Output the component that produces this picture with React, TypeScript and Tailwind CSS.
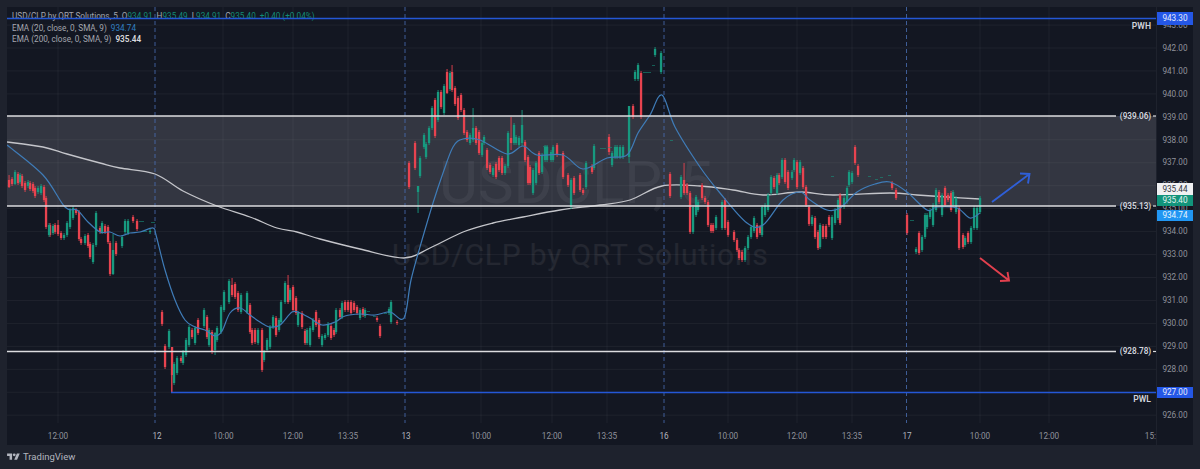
type Candle = [number, number, number, number?, number?];

const RED: Candle[] = [
  [9,180,187,175,188],[12,179,184],[18,174,183],[22,176,186],[25,183,190],[30,183,189],[33,184,191],[35,188,196],
  [44,187,200],[46,198,227],[50,225,235],[55,225,232],[58,225,234,220,236],[61,233,238],[76,210,213],[79,212,239],[81,239,243],
  [88,235,246],[90,244,257],[100,228,232],[105,226,232],[108,227,242],[110,243,274],[116,243,254],[133,217,221],[137,221,229],
  [162,312,324],[165,346,367],[172,347,375,347,392],[181,358,361],[192,330,337],[198,320,333],
  [207,317,337],[212,332,352],[232,285,295,278,297],[235,284,297],[238,293,310],[250,305,332],[252,330,343],[255,330,342],[262,330,370],
  [276,318,335],[288,285,302,275,304],[293,287,310],[296,298,313],[302,313,327],[305,331,343],[316,312,325],[319,320,337],[331,326,338],[334,330,335],
  [340,310,317],[345,302,310],[348,302,310],[351,302,313],[354,303,310],[357,307,313],[363,309,315],[377,318,320],[380,326,336],[397,322,323],
  [409,163,187],[415,143,168],[435,100,136],[441,92,107],[447,72,93,69,94],[452,72,90,65,92],[455,88,104],[458,98,118],[461,95,110],[464,110,133],[467,132,140],
  [476,128,143],[479,132,153],[487,150,168],[490,165,172],[496,164,177],[499,158,170],[502,158,173],[511,138,143,117,150],[525,142,160],[528,157,183],
  [530,167,183],[539,153,173],[557,145,155],[563,153,177],[568,175,185],[574,178,193],[580,175,190],[583,190,193],[592,166,172],[609,137,152,134,155],[633,106,117],[641,73,117],
  [670,174,196],[684,180,193,163,195],[687,185,193],[690,193,232],[702,185,198],[705,198,202],[708,202,225],[711,225,231],[713,225,231],[725,200,228],[728,222,235],[734,232,240],[737,240,250],[739,250,258],[742,252,260],
  [757,225,237],[760,227,233],[774,178,187],[779,175,183],[785,160,182],[788,172,188],[797,162,187],[803,168,187],[806,187,205],[809,207,224],[815,218,237],[818,232,248],[823,226,237],[826,226,237],[829,217,225],
  [840,195,223],[855,147,163],[858,166,175],[892,183,188],[896,190,198],[907,215,233],[919,233,253],[939,192,202],[945,188,205],[948,195,200],[951,193,210],[959,208,248],[963,235,247],[968,233,242],
];

const GREEN: Candle[] = [
  [15,172,184,170,185],[20,175,182],[28,182,186],[38,188,192],[41,186,193],[49,225,235],[53,226,233],[64,235,238],[67,223,235],[70,210,227],[73,208,218],
  [85,236,243],[93,245,262],[96,213,245],[102,223,232],[113,250,274,234,275],[122,237,246],[125,221,232],[128,221,233],[150,231,232],
  [169,331,347],[174,364,383],[177,358,373],[183,352,363],[186,340,355],[189,327,345],[195,328,343],
  [204,310,326],[209,330,345],[215,333,350,332,355],[217,328,340],[221,307,332],[224,292,310],[229,281,302],[241,295,312],[247,293,312],[258,330,343],[264,352,360],[267,340,350],[270,327,347],[273,317,327],
  [279,320,330],[281,302,322],[285,283,302],[290,290,300],[298,313,325],[307,330,343],[310,328,345],[313,320,330],[322,336,345],[325,335,338],[328,324,335],[336,310,332],[342,303,317],[360,310,318],[365,310,316],[389,309,313],[391,302,322],
  [418,186,192,186,213],[420,158,176],[424,135,147],[426,144,157],[429,128,143],[432,108,128],[438,92,120],[444,86,113],[450,73,89],[470,135,143],[473,128,140,108,142],[482,143,155],[484,137,143],
  [493,168,175],[505,166,173],[508,133,166],[514,125,143],[516,137,143],[519,138,145],[522,125,143,110,146],
  [533,170,193],[536,163,183],[542,155,172],[545,147,160],[547,147,160],[551,152,160],[553,147,160],[571,180,207],[586,163,187],[594,146,168],[612,153,165],[615,147,157],[617,147,157],[620,147,157],[623,147,157],[629,106,157,106,163],[635,72,79],[638,65,79],[655,49,55],[661,53,72],
  [681,177,197],[693,207,232],[696,197,215],[698,202,210],[716,217,228],[722,202,228],[745,248,260],[748,237,248],[751,227,237],[754,218,231],[762,207,235],[765,205,215],[768,195,210],[771,177,193],[777,175,193],[782,160,177],[792,172,178],[794,160,170],[800,162,173],[812,217,224],[820,225,247],
  [832,217,238],[835,210,223],[838,200,218],[844,198,207],[847,188,202],[849,172,185],[852,173,182],[916,249,252],[922,237,250],[925,215,237],[927,215,227],[930,210,217],[933,205,225],[936,190,210],[942,195,215],[953,192,205],[956,198,212],[965,238,245],[971,228,242],[974,208,228],[977,208,228],[980,198,212],
];

// little dashes the screenshot shows next to some candles
const DASHES: [number, number, number][] = [
  [139,221,5],[141,231,6],[151,222,4],[543,146,5],[600,148,6],[608,147,4],[643,72,8],[652,65,3],[670,140,3],[831,176,3],[868,176,3],[875,179,3],[880,177,3],[888,175,3],[910,220,4],[367,311,3],[373,316,3],[384,313,3],
];

const EMA20: [number, number][] = [[7,145],[43,175],[65,207],[77,210],[88,222],[100,232],[110,232],[120,236],[130,233],[140,232],[153,228],[156,235],[165,270],[175,300],[185,320],[195,327],[205,330],[215,336],[222,331],[230,313],[240,308],[250,315],[260,322],[270,327],[280,325],[292,312],[300,313],[310,318],[322,325],[335,322],[345,316],[360,314],[375,315],[390,312],[404,318],[411,280],[422,240],[433,203],[443,173],[453,147],[463,139],[480,140],[507,154],[523,146],[537,155],[563,155],[583,169],[607,158],[627,155],[638,133],[650,115],[662,95],[675,127],[700,167],[720,193],[747,223],[763,225],[783,200],[800,192],[810,200],[827,210],[840,208],[857,192],[875,184],[890,182],[907,192],[927,210],[937,207],[957,208],[970,218],[980,213]];
const EMA200: [number, number][] = [[7,142],[43,147],[67,154],[100,163],[120,168],[155,174],[183,191],[217,206],[250,217],[277,228],[297,232],[320,239],[360,249],[404,258],[430,248],[463,232],[493,223],[523,217],[560,210],[600,205],[630,200],[662,186],[700,186],[733,190],[763,195],[800,192],[833,195],[890,193],[917,195],[947,197],[980,199]];

// catmull-rom through the points so the averages don't look angular
const smoothPath = (pts: [number, number][]) => {
  let d = `M${pts[0][0]} ${pts[0][1]}`;
  for (let i = 0; i < pts.length - 1; i++) {
    const p0 = pts[Math.max(i - 1, 0)];
    const p1 = pts[i];
    const p2 = pts[i + 1];
    const p3 = pts[Math.min(i + 2, pts.length - 1)];
    const c1x = p1[0] + (p2[0] - p0[0]) / 6;
    const c1y = p1[1] + (p2[1] - p0[1]) / 6;
    const c2x = p2[0] - (p3[0] - p1[0]) / 6;
    const c2y = p2[1] - (p3[1] - p1[1]) / 6;
    d += ` C${c1x.toFixed(1)} ${c1y.toFixed(1)} ${c2x.toFixed(1)} ${c2y.toFixed(1)} ${p2[0]} ${p2[1]}`;
  }
  return d;
};

const GRID_X = [58, 223, 293, 348, 481, 552, 607, 728, 797, 852, 980, 1049];
const SESSIONS = [155, 405, 664, 906.5];
const PRICES = [943, 942, 941, 940, 939, 938, 937, 936, 935, 934, 933, 932, 931, 930, 929, 928, 927, 926];
const priceY = (p: number) => 48 + (942 - p) * 22.95;

const TIMES: [string, number, boolean][] = [
  ["12:00", 58, false], ["12", 157, true], ["10:00", 223.5, false], ["12:00", 293, false], ["13:35", 348, false], ["13", 406, true],
  ["10:00", 481, false], ["12:00", 552, false], ["13:35", 607, false], ["16", 664, true], ["10:00", 728, false], ["12:00", 797, false],
  ["13:35", 852, false], ["17", 907, true], ["10:00", 980, false], ["12:00", 1049, false], ["15:00", 1155, false],
];

const LEVELS: [string, number][] = [["(939.06)", 116], ["(935.13)", 206], ["(928.78)", 351.5]];

function Candles({ data, color }: { data: Candle[]; color: string }) {
  return (
    <g fill={color}>
      {data.map(([x, top, bottom, wickTop, wickBottom], i) => (
        <g key={i}>
          <rect x={x - 0.4} y={wickTop ?? top - 2} width={0.9} height={(wickBottom ?? bottom + 2) - (wickTop ?? top - 2)} />
          <rect x={x - 1.1} y={top} width={2.3} height={bottom - top} />
        </g>
      ))}
    </g>
  );
}

function ChartDrawing() {
  return (
    <svg className="absolute inset-0 h-full w-full" viewBox="7 7 1149 416">
      {GRID_X.map((x) => (
        <line key={x} x1={x} x2={x} y1={7} y2={423} stroke="#ffffff" strokeOpacity={0.05} />
      ))}
      {PRICES.map((p) => (
        <line key={p} x1={7} x2={1156} y1={priceY(p)} y2={priceY(p)} stroke="#ffffff" strokeOpacity={0.05} />
      ))}
      <rect x={7} y={116} width={1149} height={90} fill="#b2b5be" fillOpacity={0.2} />
      {SESSIONS.map((x) => (
        <line key={x} x1={x} x2={x} y1={7} y2={423} stroke="#4a6fb5" strokeOpacity={0.8} strokeDasharray="4 3" />
      ))}
      <path d={smoothPath(EMA200)} fill="none" stroke="#c4c5ca" strokeWidth={1.3} />
      <Candles data={RED} color="#e8434f" />
      <Candles data={GREEN} color="#17997f" />
      {DASHES.map(([x, y, w], i) => (
        <rect key={i} x={x} y={y} width={w} height={0.8} fill="#17997f" fillOpacity={0.7} />
      ))}
      <path d={smoothPath(EMA20)} fill="none" stroke="#3f7cb8" strokeWidth={1.2} />

      <line x1={7} x2={1156} y1={18.5} y2={18.5} stroke="#2457d6" strokeWidth={1.4} />
      <line x1={171.5} x2={171.5} y1={375} y2={392.5} stroke="#e8434f" strokeWidth={0.8} />
      <line x1={171} x2={1156} y1={392.5} y2={392.5} stroke="#2457d6" strokeWidth={1.4} />
      {LEVELS.map(([label, y]) => (
        <g key={label}>
          <line x1={7} x2={1116} y1={y} y2={y} stroke="#dcdcdf" strokeWidth={1.6} />
          <line x1={1153} x2={1156} y1={y} y2={y} stroke="#dcdcdf" strokeWidth={1.2} />
          <text x={1135.5} y={y + 2.9} textAnchor="middle" fill="#d1d4dc" fontSize={8.2} fontWeight={600} fontFamily="Roboto, sans-serif">
            {label}
          </text>
        </g>
      ))}
      <text x={1151} y={28.5} textAnchor="end" fill="#d1d4dc" fontSize={8.6} fontWeight={600} fontFamily="Roboto, sans-serif">PWH</text>
      <text x={1151} y={402} textAnchor="end" fill="#d1d4dc" fontSize={8.6} fontWeight={600} fontFamily="Roboto, sans-serif">PWL</text>

      <g fill="none" strokeWidth={1.9}>
        <path d="M992 202 L1029.5 174 M1020 173.5 L1029.5 174 L1028 183.5" stroke="#2f5fd8" />
        <path d="M980 258 L1009 280.5 M1000 281 L1009 280.5 L1007.5 272" stroke="#e2404e" />
      </g>
    </svg>
  );
}

function PriceTag({ label, className }: { label: string; className: string }) {
  return (
    <div className={`absolute left-0 flex w-[36px] items-center justify-center text-[8.2px] ${className}`}>{label}</div>
  );
}

export default function App() {
  return (
    <div className="flex h-[469px] w-[1200px] flex-col overflow-hidden bg-[#1e222d] px-[7px] pt-[7px] font-['Roboto',sans-serif]">
      <div className="flex h-[438px] w-[1186px] bg-[#131722]">
        <div className="flex w-[1149px] flex-col">
          <div className="relative h-[416px] overflow-hidden">
            {/* watermark */}
            <div className="absolute left-[432px] top-[146px] text-[60px] leading-none whitespace-nowrap text-white/[0.06]">USDCLP, 5</div>
            <div className="absolute left-[385px] top-[233px] text-[30px] leading-none tracking-[0.8px] whitespace-nowrap text-white/[0.07]">USD/CLP by QRT Solutions</div>
            {/* legend */}
            <div className="absolute left-[5px] top-[4px] flex flex-col text-[8.2px] leading-[11.5px] text-[#a3a6af]">
              <div className="flex gap-[4px] whitespace-nowrap">
                <span>USD/CLP by QRT Solutions, 5</span>
                <span>O<span className="text-[#128a74]">934.91</span></span>
                <span>H<span className="text-[#128a74]">935.49</span></span>
                <span>L<span className="text-[#128a74]">934.91</span></span>
                <span>C<span className="text-[#128a74]">935.40</span></span>
                <span className="text-[#128a74]">+0.40 (+0.04%)</span>
              </div>
              <div className="flex gap-[4px] whitespace-nowrap">
                <span>EMA (20, close, 0, SMA, 9)</span>
                <span className="text-[#2f7fc1]">934.74</span>
              </div>
              <div className="flex gap-[4px] whitespace-nowrap">
                <span>EMA (200, close, 0, SMA, 9)</span>
                <span className="font-semibold text-[#d8d9dd]">935.44</span>
              </div>
            </div>
            <ChartDrawing />
          </div>
          <div className="relative h-[22px] overflow-hidden text-[8.2px] text-[#8f929b]">
            {TIMES.map(([label, x, bold], i) => (
              <span
                key={i}
                className={`absolute top-[7px] -translate-x-1/2 leading-[12px] ${bold ? "text-[#b2b5be]" : ""}`}
                style={{ left: x - 7 }}
              >
                {label}
              </span>
            ))}
          </div>
        </div>
        <div className="relative w-[37px] border-l border-[#1e222d]">
          <div className="flex flex-col pt-[6.5px] text-[8.2px] text-[#8f929b]">
            {PRICES.map((p) => (
              <div key={p} className="flex h-[22.95px] shrink-0 items-center justify-center">{p.toFixed(2)}</div>
            ))}
          </div>
          <PriceTag label="943.30" className="top-[5px] h-[13px] bg-[#2457e6] text-[#e6ebfa]" />
          <PriceTag label="935.44" className="top-[176px] h-[12px] bg-[#f0f0f2] text-[#33363f]" />
          <PriceTag label="935.40" className="top-[188px] h-[11px] bg-[#12947b] text-[#e2f2ee]" />
          <PriceTag label="934.74" className="top-[203px] h-[11px] bg-[#2196f3] text-[#e8f3fd]" />
          <PriceTag label="927.00" className="top-[380px] h-[11px] bg-[#2457e6] text-[#e6ebfa]" />
        </div>
      </div>
      <div className="flex h-[24px] items-center gap-[3px] text-[#b2b5be]">
        <svg width="13" height="10" viewBox="0 0 36 28" fill="currentColor">
          <path d="M14 22H7V11H0V4h14v18zM28 22h-8l7.5-18h8L28 22z" />
          <circle cx="20" cy="8" r="4" />
        </svg>
        <span className="text-[9.5px] leading-none">TradingView</span>
      </div>
    </div>
  );
}
